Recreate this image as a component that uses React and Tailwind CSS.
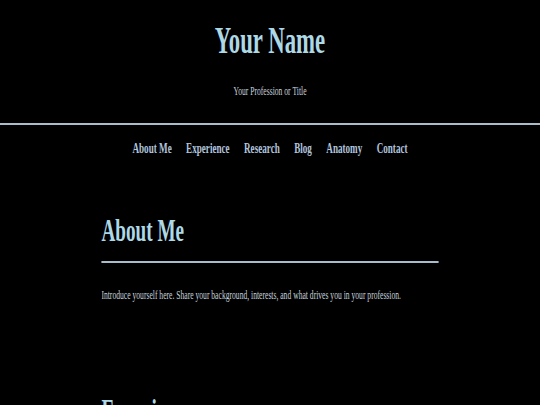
const NAV = ["About Me", "Experience", "Research", "Blog", "Anatomy", "Contact"];

export default function App() {
  return (
    <div className="min-h-screen w-full overflow-hidden bg-black">
      {/* page is laid out at 900px and squeezed horizontally, like the reference */}
      <div
        className="w-[900px] origin-top-left scale-x-[0.6]"
        style={{ fontFamily: '"Liberation Serif", "Times New Roman", serif' }}
      >
        <header className="pt-5 pb-6 text-center border-b-2 border-[#a8bccb]">
          <h1 className="text-[38px] leading-[40px] font-bold text-[#add8e6]">Your Name</h1>
          <p className="mt-[23px] text-[12.7px] leading-4 text-[#c4d2dc]">Your Profession or Title</p>
        </header>

        <nav className="mt-[13px] flex justify-center gap-6 text-[15.2px] leading-5 font-bold text-[#b0c4de]">
          {NAV.map((item) => (
            <a key={item} href="#">{item}</a>
          ))}
        </nav>

        <main className="mx-auto w-[562px]">
          <section className="mt-[54px]">
            <h2 className="pb-[13px] border-b-2 border-[#a8bccb] text-[32px] leading-9 font-bold text-[#add8e6]">
              About Me
            </h2>
            <p className="mt-6 text-[12.7px] leading-4 text-[#c4d2dc]">
              Introduce yourself here. Share your background, interests, and what drives you in your profession.
            </p>
          </section>

          <section className="mt-[89px]">
            <h2 className="pb-[13px] border-b-2 border-[#a8bccb] text-[32px] leading-9 font-bold text-[#add8e6]">
              Experience
            </h2>
          </section>
        </main>
      </div>
    </div>
  );
}
